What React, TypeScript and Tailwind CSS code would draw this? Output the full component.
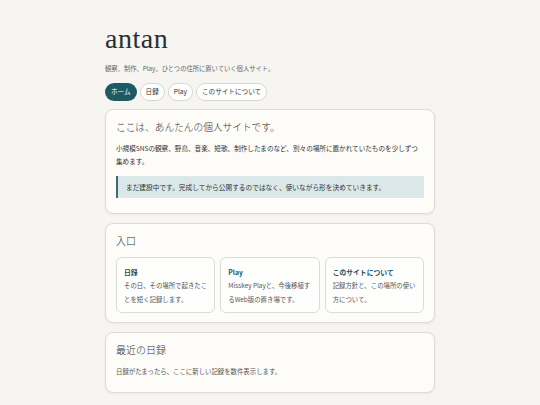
import React from "react";

const sans = { fontFamily: '"Noto Sans CJK JP", "Noto Sans", sans-serif' };

export default function App() {
  return (
    <div className="min-h-screen w-full bg-[#f6f5f1] text-[#333]" style={sans}>
      <div className="mx-auto w-[330px] pt-[22px] pb-4">
        <h1
          className="text-[28px] leading-[34px] text-[#2c2f33] tracking-[0.5px]"
          style={{ fontFamily: '"Liberation Serif", "DejaVu Serif", serif' }}
        >
          antan
        </h1>
        <p className="mt-[8px] text-[6.3px] leading-[10px] text-[#666]">
          観察、制作、Play。ひとつの住所に置いていく個人サイト。
        </p>
        <nav className="mt-[9px] flex gap-[3px]">
          <span className="flex h-[18px] items-center rounded-full bg-[#1f5a64] px-[6px] text-[6.6px] text-white">
            ホーム
          </span>
          <span className="flex h-[18px] items-center rounded-full border border-[#d6d6d2] bg-white px-[5px] text-[6.6px] text-[#333]">
            日録
          </span>
          <span className="flex h-[18px] items-center rounded-full border border-[#d6d6d2] bg-white px-[5px] text-[6.6px] text-[#333]">
            Play
          </span>
          <span className="flex h-[18px] items-center rounded-full border border-[#d6d6d2] bg-white px-[5px] text-[6.6px] text-[#333]">
            このサイトについて
          </span>
        </nav>

        <section className="mt-[8px] rounded-[8px] border border-[#dcdbd6] bg-[#fdfcf9] px-[10px] pt-[10px] pb-[15px] shadow-[0_1px_3px_rgba(0,0,0,0.05)]">
          <h2 className="text-[9.7px] leading-[14px] font-light text-[#333]">
            ここは、あんたんの個人サイトです。
          </h2>
          <p className="mt-[8px] text-[6.6px] leading-[13px] text-[#333]">
            小規模SNSの観察、野鳥、音楽、短歌、制作したまのなど、別々の場所に置かれていたものを少しずつ集めます。
          </p>
          <div className="mt-[8px] flex h-[22px] items-center border-l-2 border-[#3f6c72] bg-[#dbe8e9] pl-[8px] text-[6.7px] leading-[10px] text-[#333]">
            まだ建設中です。完成してから公開するのではなく、使いながら形を決めていきます。
          </div>
        </section>

        <section className="mt-[9px] rounded-[8px] border border-[#dcdbd6] bg-[#fdfcf9] px-[10px] pt-[10px] pb-[9px] shadow-[0_1px_3px_rgba(0,0,0,0.05)]">
          <h2 className="text-[10px] leading-[14px] font-light text-[#333]">入口</h2>
          <div className="mt-[9px] grid grid-cols-3 gap-[5px]">
            {[
              { t: "日録", d: "その日、その場所で起きたことを短く記録します。" },
              { t: "Play", d: "Misskey Playと、今後移植するWeb版の置き場です。" },
              { t: "このサイトについて", d: "記録方針と、この場所の使い方について。" },
            ].map((c) => (
              <div
                key={c.t}
                className="h-[56px] rounded-[6px] border border-[#dcdbd6] bg-[#fefefd] pl-[7px] pr-[4px] pt-[8px]"
              >
                <div className="text-[6.8px] leading-[12px] font-bold text-[#1f4f5a]">{c.t}</div>
                <p className="mt-[1px] text-[6.4px] leading-[14px] text-[#555]">{c.d}</p>
              </div>
            ))}
          </div>
        </section>

        <section className="mt-[9px] rounded-[8px] border border-[#dcdbd6] bg-[#fdfcf9] px-[10px] pt-[10px] pb-[14px] shadow-[0_1px_3px_rgba(0,0,0,0.05)]">
          <h2 className="text-[10px] leading-[14px] font-light text-[#333]">最近の日録</h2>
          <p className="mt-[8px] text-[6.4px] leading-[13px] text-[#555]">
            日録がたまったら、ここに新しい記録を数件表示します。
          </p>
        </section>
      </div>
    </div>
  );
}
